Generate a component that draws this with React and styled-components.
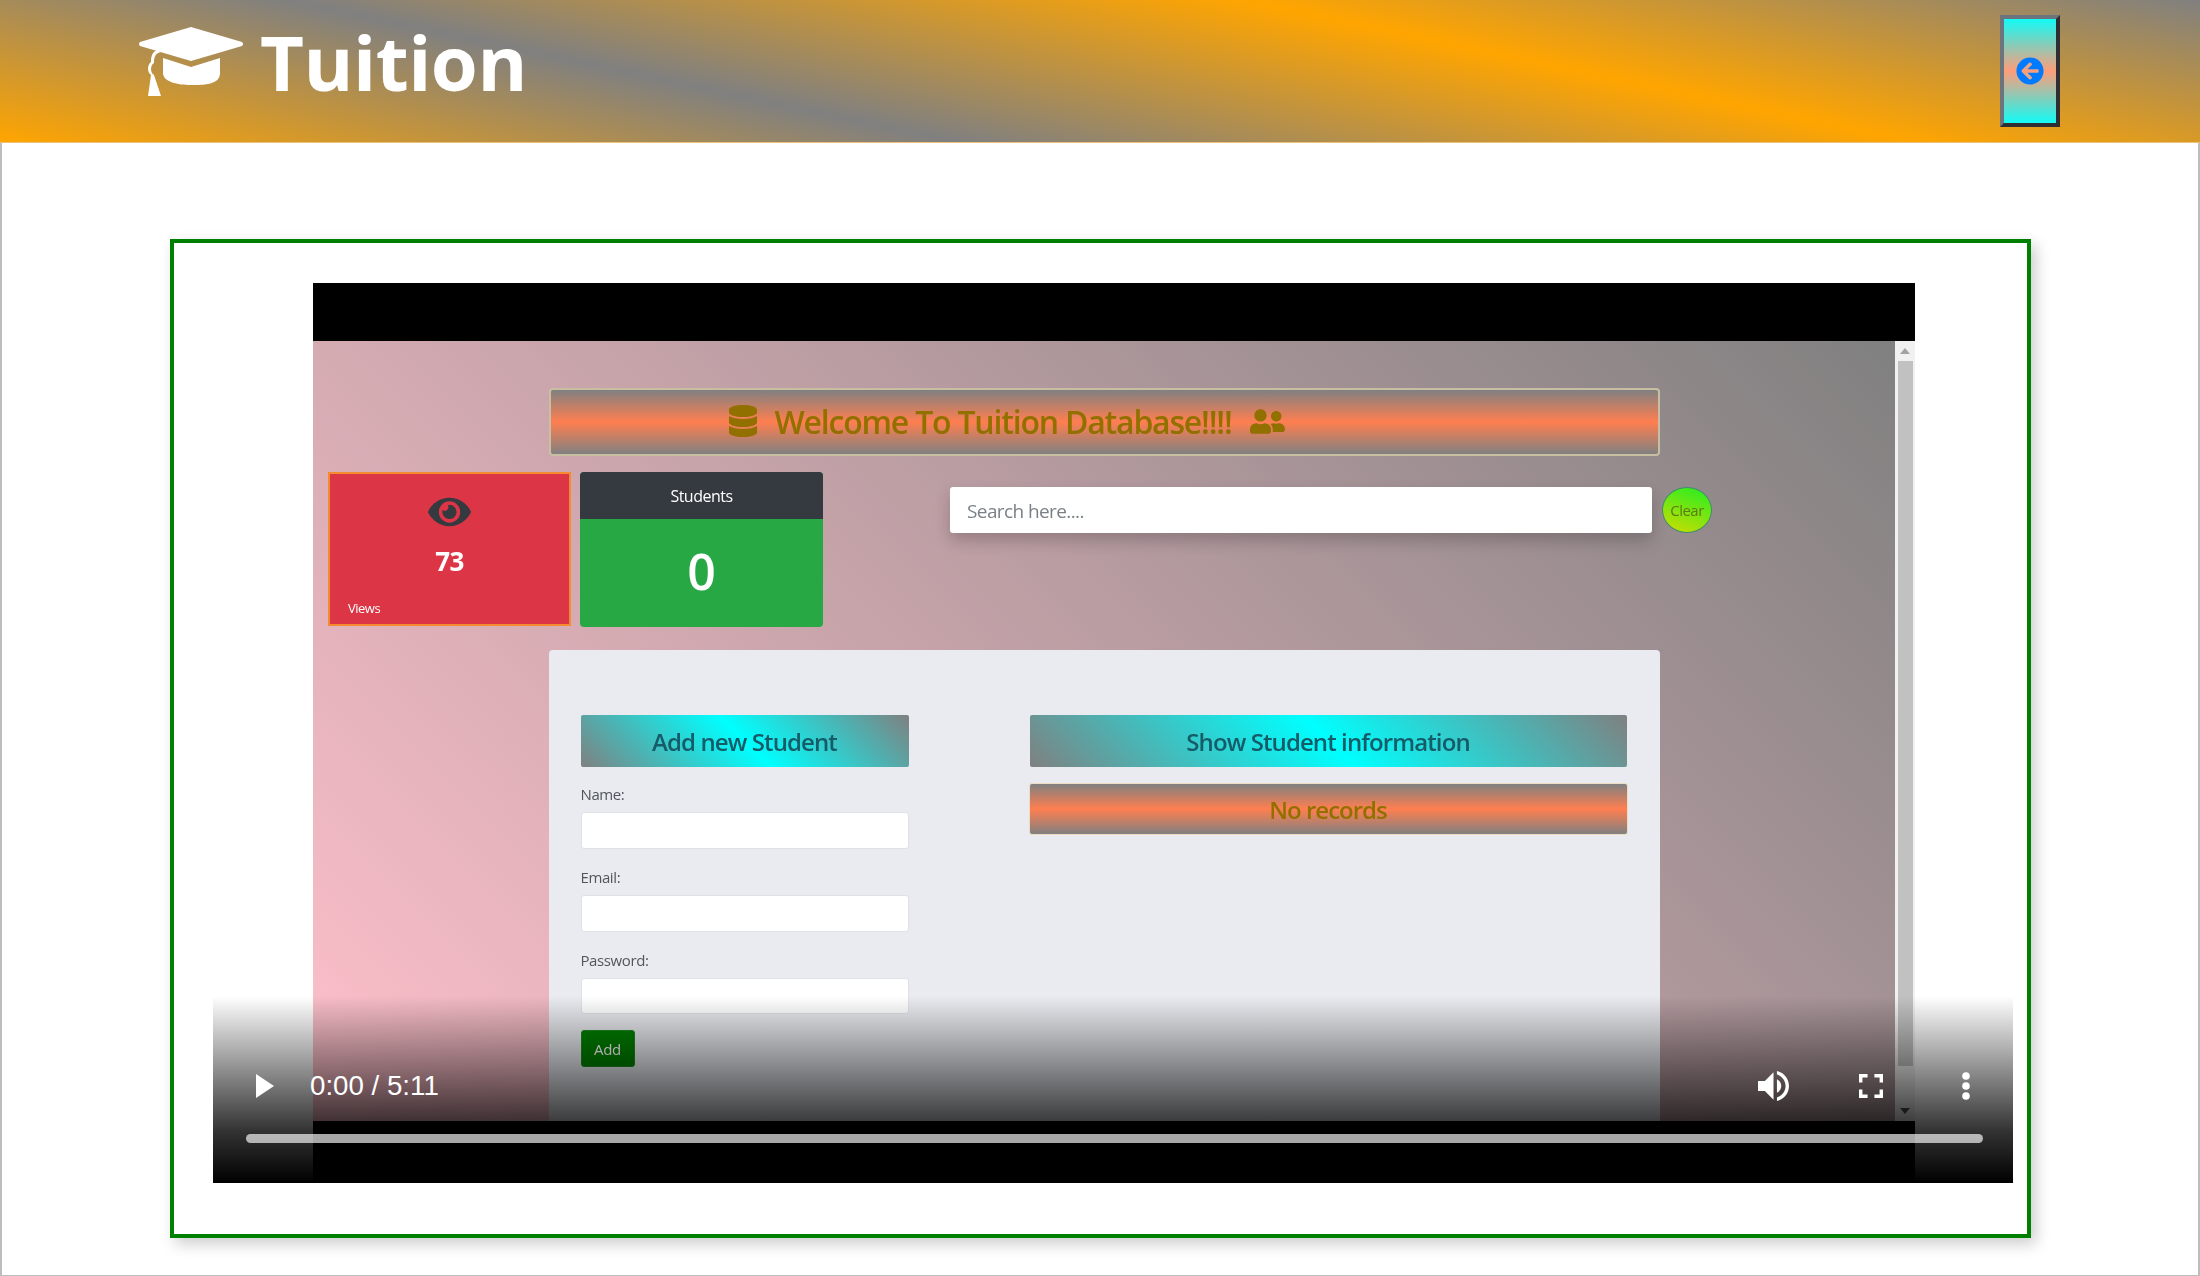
import React from "react";
import styled, { createGlobalStyle } from "styled-components";
import { FaArrowCircleLeft, FaDatabase, FaEye, FaUserFriends } from "react-icons/fa";

const GlobalStyle = createGlobalStyle`
  html, body {
    margin: 0;
    padding: 0;
    background: #fff;
  }
  * {
    box-sizing: border-box;
  }
`;

const Page = styled.div`
  width: 2200px;
  height: 1276px;
  overflow: hidden;
  font-family: "Open Sans", "Liberation Sans", sans-serif;
`;

const Header = styled.header`
  height: 143px;
  display: flex;
  align-items: flex-start;
  justify-content: space-between;
  padding: 15px 140px 0 139px;
  background: linear-gradient(12deg, orange, gray, orange, gray);
  border-bottom: 1px solid #eac27a;
`;

const Brand = styled.div`
  display: flex;
  align-items: flex-start;
  gap: 17px;
  padding-top: 12px;
`;

const Cap = styled.svg`
  width: 105px;
  height: 70px;
  fill: #fff;
`;

const BrandName = styled.h1`
  margin: -17px 0 0 -1px;
  font-size: 76px;
  line-height: 104px;
  font-weight: 700;
  color: #fff;
  letter-spacing: -0.5px;
`;

const BackButton = styled.button`
  width: 60px;
  height: 112px;
  padding: 0;
  display: flex;
  align-items: center;
  justify-content: center;
  border: 4px solid #6c757d;
  border-color: #6c757d #2f2f33 #2f2f33 #6c757d;
  background: linear-gradient(to bottom, #12fbf6, #ff9d7a, #12fbf6);
  color: #007bff;
  font-size: 28px;
`;

const Main = styled.main`
  height: 1133px;
  padding: 96px 166px 0 168px;
  border-left: 2px solid #bdbdbd;
  border-right: 2px solid #bdbdbd;
  border-bottom: 1px solid #bdbdbd;
`;

const VideoBox = styled.section`
  width: 1861px;
  height: 999px;
  padding: 40px 13px 0 39px;
  border: 4px solid green;
  box-shadow: 5px 6px 14px rgba(0, 0, 0, 0.2);
`;

const Video = styled.div`
  position: relative;
  width: 1800px;
  height: 900px;
  padding-left: 100px;
`;

const Frame = styled.div`
  width: 1602px;
  height: 900px;
  padding: 58px 0 62px;
  background: #000;
`;

const Screen = styled.div`
  height: 780px;
  display: flex;
  overflow: hidden;
  filter: blur(0.5px);
`;

const Site = styled.div`
  width: 1582px;
  height: 780px;
  padding-top: 47px;
  background: linear-gradient(45deg, #ffc0cb, gray);
  font-family: "Open Sans", "Noto Sans", sans-serif;
`;

const Banner = styled.div`
  height: ${(props) => props.$height}px;
  display: flex;
  align-items: center;
  justify-content: center;
  color: #917000;
  background: linear-gradient(to bottom, gray, coral, gray);
  border-radius: 4px;
`;

const WelcomeBanner = styled(Banner)`
  width: 1111px;
  margin: 0 auto;
  gap: 15px;
  padding: 0 196px 2px 0;
  border: 2px solid #c9bda2;
  font-size: 32px;
  font-weight: 600;
  letter-spacing: -1.2px;
  svg {
    font-size: 32px;
    flex: none;
  }
`;

const Friends = styled(FaUserFriends)`
  && {
    font-size: 35px;
  }
  margin-left: 3px;
`;

const TopRow = styled.div`
  display: flex;
  align-items: flex-start;
  gap: 9px;
  margin-top: 16px;
  padding-left: 15px;
`;

const ViewsCard = styled.div`
  width: 243px;
  height: 154px;
  display: flex;
  flex-direction: column;
  align-items: center;
  padding-top: 24px;
  background: #dc3545;
  border: 2px solid #f58a2e;
  color: #fff;
`;

const EyeIcon = styled(FaEye)`
  width: 43px;
  height: 38px;
  margin-top: -5px;
  color: #343a40;
`;

const ViewCount = styled.div`
  margin-top: 13px;
  font-size: 26px;
  line-height: 34px;
  font-weight: 700;
  letter-spacing: -0.5px;
`;

const ViewLabel = styled.div`
  align-self: flex-start;
  margin: 21px 0 0 18px;
  font-size: 13px;
  line-height: 18px;
  letter-spacing: -0.5px;
`;

const StudentsCard = styled.div`
  width: 243px;
  height: 155px;
  overflow: hidden;
  border-radius: 4px;
  background: #28a745;
  color: #fff;
  text-align: center;
`;

const StudentsHead = styled.div`
  height: 47px;
  background: #343a40;
  font-size: 16px;
  line-height: 48px;
  letter-spacing: -0.5px;
`;

const StudentsCount = styled.div`
  font-size: 50px;
  font-weight: 600;
  line-height: 104px;
`;

const SearchInput = styled.input`
  width: 702px;
  height: 46px;
  margin: 15px 0 0 118px;
  padding: 2px 17px 0;
  border: 0;
  border-radius: 3px;
  background: #fff;
  box-shadow: 0 8px 16px rgba(0, 0, 0, 0.2);
  font-family: inherit;
  font-size: 19px;
  letter-spacing: -0.6px;
  &::placeholder {
    color: #7a8086;
  }
`;

const ClearButton = styled.button`
  width: 50px;
  height: 46px;
  margin: 15px 0 0 1px;
  padding: 0;
  border: 1px solid #3f8f6a;
  border-radius: 50%;
  background: linear-gradient(200deg, #22ee22, #d0dd00);
  color: #5c7a10;
  font-family: inherit;
  font-size: 15px;
  letter-spacing: -0.5px;
`;

const Panel = styled.div`
  width: 1111px;
  height: 480px;
  margin: 23px auto 0;
  padding: 65px 33px 0 32px;
  display: flex;
  gap: 121px;
  background: #e9ebf0;
  border-radius: 4px;
`;

const FormColumn = styled.form`
  width: 328px;
  flex: none;
`;

const ListColumn = styled.div`
  flex: 1;
  display: flex;
  flex-direction: column;
  gap: 17px;
`;

const CyanHeading = styled.h2`
  height: 52px;
  margin: 0;
  display: flex;
  align-items: center;
  justify-content: center;
  background: linear-gradient(45deg, gray, aqua, gray);
  border-radius: 2px;
  color: #155b68;
  font-size: 24px;
  font-weight: 600;
  letter-spacing: -0.9px;
`;

const EmptyBanner = styled(Banner)`
  border-radius: 2px;
  font-size: 24px;
  font-weight: 600;
  letter-spacing: -1px;
  box-shadow: 0 0 0 1px #ecdcc0;
`;

const Field = styled.label`
  display: block;
  padding-top: ${(props) => props.$top}px;
  color: #50565c;
  font-size: 15px;
  line-height: 20px;
  letter-spacing: -0.4px;
`;

const TextInput = styled.input`
  display: block;
  width: 100%;
  height: ${(props) => props.$height || 37}px;
  margin-top: 8px;
  border: 1px solid #dfe1e6;
  border-radius: 3px;
  background: #fff;
`;

const AddButton = styled.button`
  display: block;
  width: 54px;
  height: 37px;
  margin-top: 16px;
  padding: 0;
  border: 1px solid #1c8a1c;
  border-radius: 3px;
  background: green;
  color: #fff;
  font-family: inherit;
  font-size: 15px;
  letter-spacing: -0.3px;
`;

const Scrollbar = styled.div`
  position: relative;
  width: 20px;
  height: 780px;
  padding: 20px 2px 55px 3px;
  background: #f1f1f1;
`;

const ScrollThumb = styled.div`
  height: 100%;
  background: #c1c1c1;
`;

const ScrollArrow = styled.span`
  position: absolute;
  left: 5px;
  ${(props) => (props.$down ? "bottom: 7px;" : "top: 7px;")}
  border-left: 5px solid transparent;
  border-right: 5px solid transparent;
  ${(props) => (props.$down ? "border-top: 6px solid #505050;" : "border-bottom: 6px solid #a3a3a3;")}
`;

const Controls = styled.div`
  position: absolute;
  left: 0;
  right: 0;
  bottom: 0;
  height: 187px;
  padding: 72px 30px 0 33px;
  background: linear-gradient(
    to bottom,
    rgba(0, 0, 0, 0),
    rgba(0, 0, 0, 0.5) 45%,
    rgba(0, 0, 0, 0.8) 72%,
    rgba(0, 0, 0, 1)
  );
  color: #fff;
  font-family: "Liberation Sans", Arial, sans-serif;
`;

const ControlRow = styled.div`
  height: 36px;
  display: flex;
  align-items: center;
`;

const PlayIcon = styled.svg`
  width: 18px;
  height: 24px;
  margin-left: 10px;
  fill: #fff;
`;

const TimeText = styled.span`
  margin-left: 36px;
  font-size: 27.7px;
  line-height: 36px;
`;

const VolumeIcon = styled.svg`
  width: 31px;
  height: 30px;
  margin-left: auto;
  fill: #fff;
`;

const FullscreenIcon = styled.svg`
  width: 24px;
  height: 24px;
  margin-left: 70px;
  fill: #fff;
`;

const MenuIcon = styled.svg`
  width: 8px;
  height: 28px;
  margin: 0 13px 0 79px;
  fill: #fff;
`;

const Timeline = styled.div`
  height: 9px;
  margin-top: 30px;
  border-radius: 5px;
  background: rgba(255, 255, 255, 0.66);
`;

const GradCap = () => (
  <Cap viewBox="0 0 105 70">
    <path d="M52 0 L103 15 Q105 17 103 19 L52 34 L1 19 Q-1 17 1 15 Z" />
    <path d="M24 31 L52 40 L81 31 L81 46 C81 58 65 58 52 58 C39 58 24 55 24 46 Z" />
    <path d="M22 25 C17 26 15 29 15 36 C11 38 11 46 15 48 L22 69 L9 69 L12 48 C8 45 8 38 12 35 C12 28 14 24 19 23 Z" />
  </Cap>
);

export default function App() {
  return (
    <Page>
      <GlobalStyle />
      <Header>
        <Brand>
          <GradCap />
          <BrandName>Tuition</BrandName>
        </Brand>
        <BackButton aria-label="Back">
          <FaArrowCircleLeft />
        </BackButton>
      </Header>
      <Main>
        <VideoBox>
          <Video>
            <Frame>
              <Screen>
                <Site>
                  <WelcomeBanner $height={68}>
                    <FaDatabase />
                    <span>Welcome To Tuition Database!!!!</span>
                    <Friends />
                  </WelcomeBanner>
                  <TopRow>
                    <ViewsCard>
                      <EyeIcon />
                      <ViewCount>73</ViewCount>
                      <ViewLabel>Views</ViewLabel>
                    </ViewsCard>
                    <StudentsCard>
                      <StudentsHead>Students</StudentsHead>
                      <StudentsCount>0</StudentsCount>
                    </StudentsCard>
                    <SearchInput placeholder="Search here...." />
                    <ClearButton>Clear</ClearButton>
                  </TopRow>
                  <Panel>
                    <FormColumn>
                      <CyanHeading>Add new Student</CyanHeading>
                      <Field $top={17}>
                        Name:
                        <TextInput />
                      </Field>
                      <Field $top={18}>
                        Email:
                        <TextInput />
                      </Field>
                      <Field $top={18}>
                        Password:
                        <TextInput $height={36} />
                      </Field>
                      <AddButton type="button">Add</AddButton>
                    </FormColumn>
                    <ListColumn>
                      <CyanHeading>Show Student information</CyanHeading>
                      <EmptyBanner $height={50}>No records</EmptyBanner>
                    </ListColumn>
                  </Panel>
                </Site>
                <Scrollbar>
                  <ScrollArrow />
                  <ScrollThumb />
                  <ScrollArrow $down />
                </Scrollbar>
              </Screen>
            </Frame>
            <Controls>
              <ControlRow>
                <PlayIcon viewBox="0 0 18 24">
                  <path d="M0 0 L18 12 L0 24 Z" />
                </PlayIcon>
                <TimeText>0:00 / 5:11</TimeText>
                <VolumeIcon viewBox="3 3.2 18 17.6" preserveAspectRatio="none">
                  <path d="M3 9v6h4l5 5V4L7 9H3zm13.5 3c0-1.77-1.02-3.29-2.5-4.03v8.05c1.48-.73 2.5-2.25 2.5-4.02zM14 3.23v2.06c2.89.86 5 3.54 5 6.71s-2.11 5.85-5 6.71v2.06c4.01-.91 7-4.49 7-8.77s-2.99-7.86-7-8.77z" />
                </VolumeIcon>
                <FullscreenIcon viewBox="5 5 14 14">
                  <path d="M7 14H5v5h5v-2H7v-3zm-2-4h2V7h3V5H5v5zm12 7h-3v2h5v-5h-2v3zM14 5v2h3v3h2V5h-5z" />
                </FullscreenIcon>
                <MenuIcon viewBox="0 0 8 28">
                  <circle cx="4" cy="4" r="3.8" />
                  <circle cx="4" cy="14" r="3.8" />
                  <circle cx="4" cy="24" r="3.8" />
                </MenuIcon>
              </ControlRow>
              <Timeline />
            </Controls>
          </Video>
        </VideoBox>
      </Main>
    </Page>
  );
}
